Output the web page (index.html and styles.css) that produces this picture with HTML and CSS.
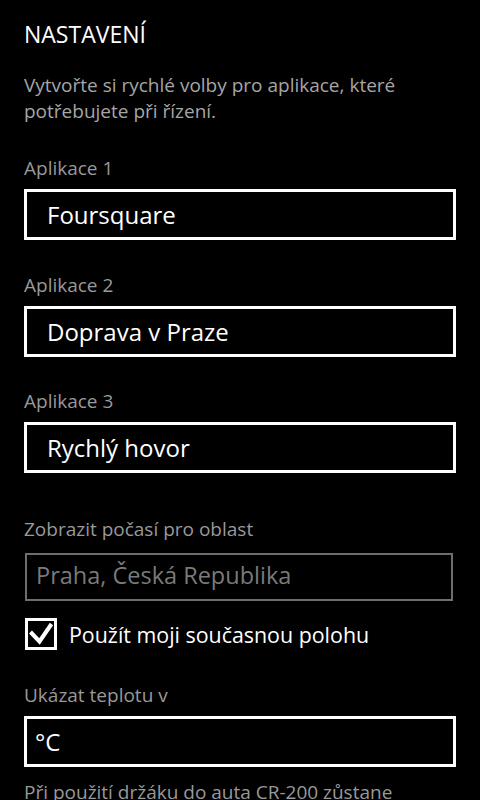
FILE: index.html
```html
<!DOCTYPE html>
<html lang="cs">
<head>
<meta charset="utf-8">
<link rel="stylesheet" href="styles.css">
</head>
<body>
<main class="page">
  <h1 class="title">NASTAVENÍ</h1>
  <p class="desc">Vytvořte si rychlé volby pro aplikace, které potřebujete při řízení.</p>

  <section class="group group-first">
    <div class="label">Aplikace 1</div>
    <div class="box">Foursquare</div>
  </section>
  <section class="group">
    <div class="label">Aplikace 2</div>
    <div class="box">Doprava v Praze</div>
  </section>
  <section class="group">
    <div class="label">Aplikace 3</div>
    <div class="box">Rychlý hovor</div>
  </section>

  <section class="group group-weather">
    <div class="label">Zobrazit počasí pro oblast</div>
    <div class="box box-disabled">Praha, Česká Republika</div>
  </section>

  <div class="check-row">
    <span class="checkbox">
      <svg width="26" height="26" viewBox="0 0 26 26"><path d="M2.5 11 L11.5 20.5 L23.5 3" fill="none" stroke="#fff" stroke-width="4" stroke-linejoin="miter"/></svg>
    </span>
    <span class="check-label">Použít moji současnou polohu</span>
  </div>

  <section class="group group-temp">
    <div class="label">Ukázat teplotu v</div>
    <div class="box box-temp">°C</div>
  </section>

  <p class="footer">Při použití držáku do auta CR-200 zůstane</p>
</main>
</body>
</html>
```

FILE: styles.css
```css
html, body {
  margin: 0;
  padding: 0;
  background: #000;
}
body {
  font-family: "Open Sans", "Noto Sans", sans-serif;
  color: #fff;
  width: 480px;
  height: 800px;
  overflow: hidden;
}
.page {
  padding: 0 24px;
}
.title {
  margin: 0;
  padding-top: 18px;
  font-size: 23px;
  font-weight: 400;
  line-height: 32px;
}
.desc {
  margin: 22px 0 0;
  font-size: 19px;
  line-height: 26px;
  color: #a6a6a6;
}
.group {
  margin-top: 32.5px;
}
.group-first {
  margin-top: 32px;
}
.label {
  font-size: 19px;
  line-height: 24px;
  color: #999;
}
.box {
  margin-top: 9px;
  box-sizing: border-box;
  height: 51px;
  border: 3px solid #fff;
  display: flex;
  align-items: center;
  padding-left: 20px;
  font-size: 24px;
  color: #fff;
}
.group-weather {
  margin-top: 44px;
}
.box-disabled {
  margin: 12px 3px 0 1px;
  height: 48px;
  border: 2px solid #6e6e6e;
  padding-left: 9px;
  padding-bottom: 4px;
  font-size: 23.5px;
  color: #7a7a7a;
}
.check-row {
  margin-top: 17px;
  display: flex;
  align-items: center;
  gap: 12px;
  padding-left: 1px;
}
.checkbox {
  box-sizing: border-box;
  width: 32px;
  height: 32px;
  border: 3px solid #fff;
  display: flex;
  align-items: center;
  justify-content: center;
}
.check-label {
  font-size: 21.4px;
  color: #fff;
}
.group-temp {
  margin-top: 33px;
}
.box-temp {
  padding-left: 8px;
}
.footer {
  margin: 13px 0 0;
  font-size: 19px;
  line-height: 25px;
  color: #999;
  white-space: nowrap;
}
```
